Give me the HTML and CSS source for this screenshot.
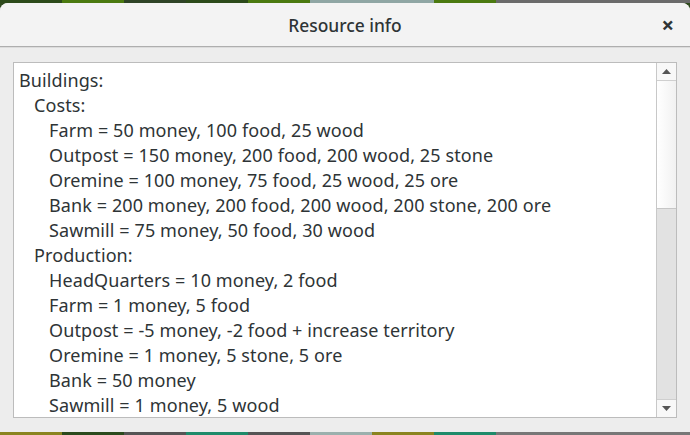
FILE: index.html
```html
<!DOCTYPE html>
<html>
<head>
<meta charset="utf-8">
<link rel="stylesheet" href="styles.css">
</head>
<body>
<div class="strip strip-top">
  <span class="s1"></span><span class="s2"></span><span class="s3"></span><span class="s1"></span><span class="s2"></span><span class="s4"></span><span class="s4"></span><span class="s2"></span><span class="s5"></span>
</div>
<div class="window">
  <div class="header">
    <div class="title">Resource info</div>
    <div class="close">×</div>
  </div>
  <div class="body">
    <div class="textbox">
      <div class="text">
        <div class="l0">Buildings:</div>
        <div class="l1">Costs:</div>
        <div class="l2">Farm = 50 money, 100 food, 25 wood</div>
        <div class="l2">Outpost = 150 money, 200 food, 200 wood, 25 stone</div>
        <div class="l2">Oremine = 100 money, 75 food, 25 wood, 25 ore</div>
        <div class="l2">Bank = 200 money, 200 food, 200 wood, 200 stone, 200 ore</div>
        <div class="l2">Sawmill = 75 money, 50 food, 30 wood</div>
        <div class="l1">Production:</div>
        <div class="l2">HeadQuarters = 10 money, 2 food</div>
        <div class="l2">Farm = 1 money, 5 food</div>
        <div class="l2">Outpost = -5 money, -2 food + increase territory</div>
        <div class="l2">Oremine = 1 money, 5 stone, 5 ore</div>
        <div class="l2">Bank = 50 money</div>
        <div class="l2">Sawmill = 1 money, 5 wood</div>
      </div>
      <div class="scrollbar">
        <div class="btn up"><svg width="9" height="5" viewBox="0 0 9 5"><path d="M0 5 L4.5 0 L9 5 Z" fill="#555"/></svg></div>
        <div class="track">
          <div class="thumb"></div>
        </div>
        <div class="btn down"><svg width="9" height="5" viewBox="0 0 9 5"><path d="M0 0 L4.5 5 L9 0 Z" fill="#555"/></svg></div>
      </div>
    </div>
  </div>
</div>
<div class="strip strip-bottom">
  <span class="b1"></span><span class="b2"></span><span class="b3"></span><span class="b4"></span><span class="b3"></span><span class="b5"></span><span class="b1"></span><span class="b4"></span><span class="b6"></span>
</div>
</body>
</html>
```
FILE: styles.css
```css
html, body {
  margin: 0;
  padding: 0;
  width: 690px;
  height: 435px;
  overflow: hidden;
  background: #2f4a1e;
  font-family: "Noto Sans", "DejaVu Sans", sans-serif;
}
.strip {
  display: flex;
  height: 3px;
}
.strip span { flex: 0 0 62px; height: 100%; }
.strip span:last-child { flex: 1 1 auto; }
.strip-top .s1 { background: #2c4a1a; }
.strip-top .s2 { background: #4b7a10; }
.strip-top .s3 { background: #2e4326; }
.strip-top .s4 { background: #8fa6a4; }
.strip-top .s5 { background: #6a6a6a; }
.strip-bottom .b1 { background: #8a8420; }
.strip-bottom .b2 { background: #2b4a1d; }
.strip-bottom .b3 { background: #555555; }
.strip-bottom .b4 { background: #1f8a6a; }
.strip-bottom .b5 { background: #9bb0ad; }
.strip-bottom .b6 { background: #777777; }
.window {
  height: 429px;
  background: #ededed;
  border-radius: 8px 8px 0 0;
  display: flex;
  flex-direction: column;
  overflow: hidden;
}
.header {
  height: 43px;
  flex: 0 0 43px;
  background: #f3f3f3;
  border-bottom: 1px solid #aeaeae;
  box-shadow: 0 1px 0 #dcdcdc;
  display: flex;
  align-items: center;
  justify-content: center;
  position: relative;
}
.title {
  font-size: 17.4px;
  font-weight: 500;
  color: #2e3436;
}
.close {
  position: absolute;
  right: 16px;
  top: 9px;
  font-size: 22px;
  font-weight: bold;
  color: #2e3436;
  line-height: 24px;
}
.body {
  flex: 1;
  padding: 15px 13px 0 13px;
}
.textbox {
  height: 354px;
  background: #ffffff;
  border: 1px solid #bcbcbc;
  display: flex;
}
.text {
  flex: 1;
  padding: 5px 0 0 5px;
  overflow: hidden;
  font-size: 18px;
  letter-spacing: 0.1px;
  line-height: 25px;
  color: #2e3436;
  white-space: nowrap;
}
.l1 { padding-left: 15px; }
.l2 { padding-left: 30px; }
.scrollbar {
  flex: 0 0 19px;
  border-left: 1px solid #c8c8c8;
  display: flex;
  flex-direction: column;
  background: #f6f6f6;
}
.btn {
  flex: 0 0 17px;
  display: flex;
  align-items: center;
  justify-content: center;
  background: #f8f8f8;
}
.btn.up { border-bottom: 1px solid #cfcfcf; }
.btn.down { border-top: 1px solid #cfcfcf; }
.track {
  flex: 1;
  background: #e2e2e2;
}
.thumb {
  height: 127px;
  background: linear-gradient(to right, #ffffff, #f1f1f1);
  border-bottom: 1px solid #c6c6c6;
}
```
